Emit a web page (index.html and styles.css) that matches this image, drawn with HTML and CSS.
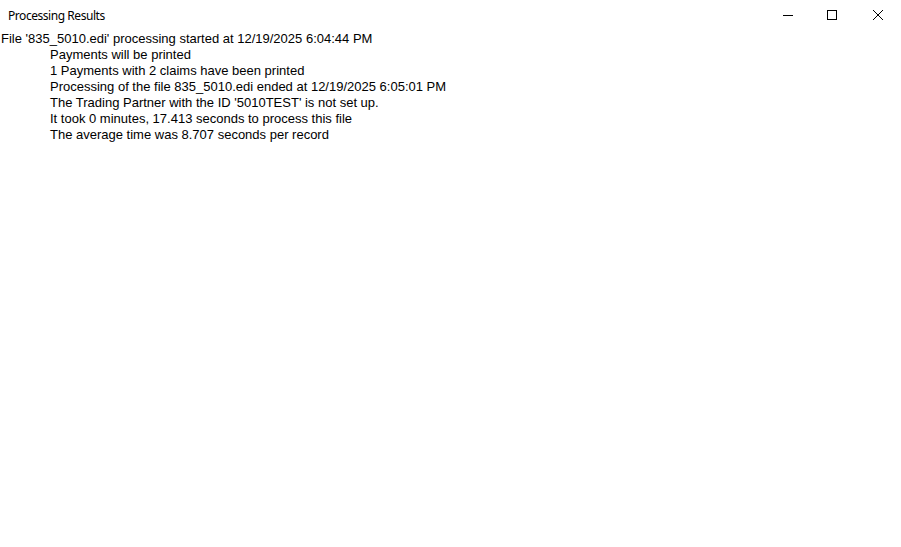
FILE: index.html
```html
<!DOCTYPE html>
<html lang="en">
<head>
<meta charset="utf-8">
<title>Processing Results</title>
<link rel="stylesheet" href="styles.css">
</head>
<body>
<div class="window">
  <div class="titlebar">
    <div class="title">Processing Results</div>
    <div class="controls">
      <div class="ctl ctl-min">
        <svg width="10" height="10" viewBox="0 0 10 10"><line x1="0" y1="5.5" x2="10" y2="5.5" stroke="#000" stroke-width="1"/></svg>
      </div>
      <div class="ctl">
        <svg width="10" height="10" viewBox="0 0 10 10"><rect x="0.5" y="0.5" width="9" height="9" fill="none" stroke="#000" stroke-width="1"/></svg>
      </div>
      <div class="ctl">
        <svg width="10" height="10" viewBox="0 0 10 10"><path d="M0 0L10 10M10 0L0 10" stroke="#000" stroke-width="1"/></svg>
      </div>
    </div>
  </div>
  <div class="log">
    <div class="line">File '835_5010.edi' processing started at 12/19/2025 6:04:44 PM</div>
    <div class="line indent">Payments will be printed</div>
    <div class="line indent">1 Payments with 2 claims have been printed</div>
    <div class="line indent">Processing of the file 835_5010.edi ended at 12/19/2025 6:05:01 PM</div>
    <div class="line indent">The Trading Partner with the ID '5010TEST' is not set up.</div>
    <div class="line indent">It took 0 minutes, 17.413 seconds to process this file</div>
    <div class="line indent">The average time was 8.707 seconds per record</div>
  </div>
</div>
</body>
</html>
```

FILE: styles.css
```css
html, body {
  margin: 0;
  padding: 0;
  background: #ffffff;
}
.window {
  width: 901px;
  height: 547px;
  background: #ffffff;
  display: flex;
  flex-direction: column;
}
.titlebar {
  height: 30px;
  display: flex;
  align-items: center;
  justify-content: space-between;
}
.title {
  padding-left: 8px;
  font-family: "Noto Sans", "Open Sans", sans-serif;
  font-size: 12px;
  letter-spacing: -0.45px;
  color: #000;
}
.controls {
  display: flex;
  height: 30px;
}
.ctl {
  width: 46px;
  height: 30px;
  display: flex;
  align-items: center;
  justify-content: center;
}
.ctl-min svg {
  margin-left: 4px;
}
.ctl svg {
  display: block;
  shape-rendering: crispEdges;
}
.log {
  padding-left: 1px;
  padding-top: 1px;
  font-family: "Liberation Sans", Arial, sans-serif;
  font-size: 13px;
  line-height: 16px;
  color: #000;
}
.indent {
  padding-left: 49px;
}
```
